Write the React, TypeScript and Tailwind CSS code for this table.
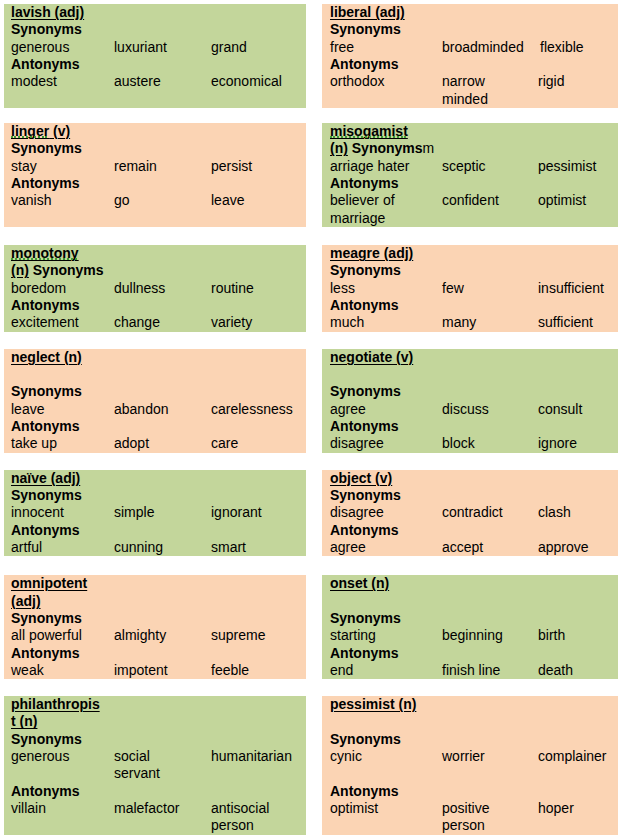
import type { ReactNode } from "react";

const green = "bg-[#c3d69b]";
const peach = "bg-[#fbd4b4]";

function Card({ tone, right, children }: { tone: string; right?: boolean; children: ReactNode }) {
  return (
    <div className={`${tone} ${right ? "pl-[8px]" : "pl-[7px]"} text-[14px] leading-[17.33px] text-black`}>
      {children}
    </div>
  );
}

function Title({ children }: { children: ReactNode }) {
  return <div className="font-bold underline decoration-1 underline-offset-[2px]">{children}</div>;
}

// green spell-check dots under a word
function Squiggle({ children }: { children: ReactNode }) {
  return (
    <span className="relative">
      {children}
      <span className="absolute left-0 right-[2px] bottom-[1px] h-[2px] border-b-2 border-dotted border-[#3f9a35]" />
    </span>
  );
}

function Label({ children }: { children: ReactNode }) {
  return <div className="font-bold">{children}</div>;
}

function Blank() {
  return <div className="h-[17.33px]" />;
}

function Row({ cells, right }: { cells: ReactNode[]; right?: boolean }) {
  return (
    <div className={`grid ${right ? "grid-cols-[112px_96px_1fr]" : "grid-cols-[103px_97px_1fr]"}`}>
      {cells.map((c, i) => (
        <div key={i}>{c}</div>
      ))}
    </div>
  );
}

export default function App() {
  return (
    <div className="w-[622px] min-h-[840px] bg-white pl-[4px] pt-[4px] font-['Liberation_Sans',Arial,sans-serif]">
      {/* row 1 */}
      <div className="grid grid-cols-[302px_296px] gap-x-[16px]">
        <Card tone={green}>
          <Title>lavish (adj)</Title>
          <Label>Synonyms</Label>
          <Row cells={["generous", "luxuriant", "grand"]} />
          <Label>Antonyms</Label>
          <Row cells={["modest", "austere", "economical"]} />
          <Blank />
        </Card>
        <Card tone={peach} right>
          <Title>liberal (adj)</Title>
          <Label>Synonyms</Label>
          <Row right cells={["free", "broadminded", <span className="pl-[2px]">flexible</span>]} />
          <Label>Antonyms</Label>
          <Row right cells={["orthodox", <>narrow<br />minded</>, "rigid"]} />
        </Card>
      </div>

      {/* row 2 */}
      <div className="mt-[15px] grid grid-cols-[302px_296px] gap-x-[16px]">
        <Card tone={peach}>
          <Title>
            <Squiggle>linger</Squiggle> (v)
          </Title>
          <Label>Synonyms</Label>
          <Row cells={["stay", "remain", "persist"]} />
          <Label>Antonyms</Label>
          <Row cells={["vanish", "go", "leave"]} />
          <Blank />
        </Card>
        <Card tone={green} right>
          <Title>
            <Squiggle>misogamist</Squiggle>{" "}
          </Title>
          <div>
            <span className="font-bold underline decoration-1 underline-offset-[2px]">(n)</span>{" "}
            <span className="font-bold">Synonyms</span>m
          </div>
          <Row right cells={["arriage hater", "sceptic", "pessimist"]} />
          <Label>Antonyms</Label>
          <Row right cells={[<>believer of<br />marriage</>, "confident", "optimist"]} />
        </Card>
      </div>

      {/* row 3 */}
      <div className="mt-[18px] grid grid-cols-[302px_296px] gap-x-[16px]">
        <Card tone={green}>
          <Title>
            <Squiggle>monotony</Squiggle>{" "}
          </Title>
          <div>
            <span className="font-bold underline decoration-1 underline-offset-[2px]">(n)</span>{" "}
            <span className="font-bold">Synonyms</span>
          </div>
          <Row cells={["boredom", "dullness", "routine"]} />
          <Label>Antonyms</Label>
          <Row cells={["excitement", "change", "variety"]} />
        </Card>
        <Card tone={peach} right>
          <Title>meagre (adj)</Title>
          <Label>Synonyms</Label>
          <Row right cells={["less", "few", "insufficient"]} />
          <Label>Antonyms</Label>
          <Row right cells={["much", "many", "sufficient"]} />
        </Card>
      </div>

      {/* row 4 */}
      <div className="mt-[17px] grid grid-cols-[302px_296px] gap-x-[16px]">
        <Card tone={peach}>
          <Title>neglect (n)</Title>
          <Blank />
          <Label>Synonyms</Label>
          <Row cells={["leave", "abandon", "carelessness"]} />
          <Label>Antonyms</Label>
          <Row cells={["take up", "adopt", "care"]} />
        </Card>
        <Card tone={green} right>
          <Title>negotiate (v)</Title>
          <Blank />
          <Label>Synonyms</Label>
          <Row right cells={["agree", "discuss", "consult"]} />
          <Label>Antonyms</Label>
          <Row right cells={["disagree", "block", "ignore"]} />
        </Card>
      </div>

      {/* row 5 */}
      <div className="mt-[17px] grid grid-cols-[302px_296px] gap-x-[16px]">
        <Card tone={green}>
          <Title>naïve (adj)</Title>
          <Label>Synonyms</Label>
          <Row cells={["innocent", "simple", "ignorant"]} />
          <Label>Antonyms</Label>
          <Row cells={["artful", "cunning", "smart"]} />
        </Card>
        <Card tone={peach} right>
          <Title>object (v)</Title>
          <Label>Synonyms</Label>
          <Row right cells={["disagree", "contradict", "clash"]} />
          <Label>Antonyms</Label>
          <Row right cells={["agree", "accept", "approve"]} />
        </Card>
      </div>

      {/* row 6 */}
      <div className="mt-[19px] grid grid-cols-[302px_296px] gap-x-[16px]">
        <Card tone={peach}>
          <Title>omnipotent</Title>
          <Title>(adj)</Title>
          <Label>Synonyms</Label>
          <Row cells={["all powerful", "almighty", "supreme"]} />
          <Label>Antonyms</Label>
          <Row cells={["weak", "impotent", "feeble"]} />
        </Card>
        <Card tone={green} right>
          <Title>onset (n)</Title>
          <Blank />
          <Label>Synonyms</Label>
          <Row right cells={["starting", "beginning", "birth"]} />
          <Label>Antonyms</Label>
          <Row right cells={["end", "finish line", "death"]} />
        </Card>
      </div>

      {/* row 7 */}
      <div className="mt-[17px] grid grid-cols-[302px_296px] gap-x-[16px]">
        <Card tone={green}>
          <Title>philanthropis</Title>
          <Title>t (n)</Title>
          <Label>Synonyms</Label>
          <Row cells={["generous", <>social<br />servant</>, "humanitarian"]} />
          <Label>Antonyms</Label>
          <Row cells={["villain", "malefactor", <>antisocial<br />person</>]} />
        </Card>
        <Card tone={peach} right>
          <Title>pessimist (n)</Title>
          <Blank />
          <Label>Synonyms</Label>
          <Row right cells={["cynic", "worrier", "complainer"]} />
          <Blank />
          <Label>Antonyms</Label>
          <Row right cells={["optimist", <>positive<br />person</>, "hoper"]} />
        </Card>
      </div>
    </div>
  );
}
